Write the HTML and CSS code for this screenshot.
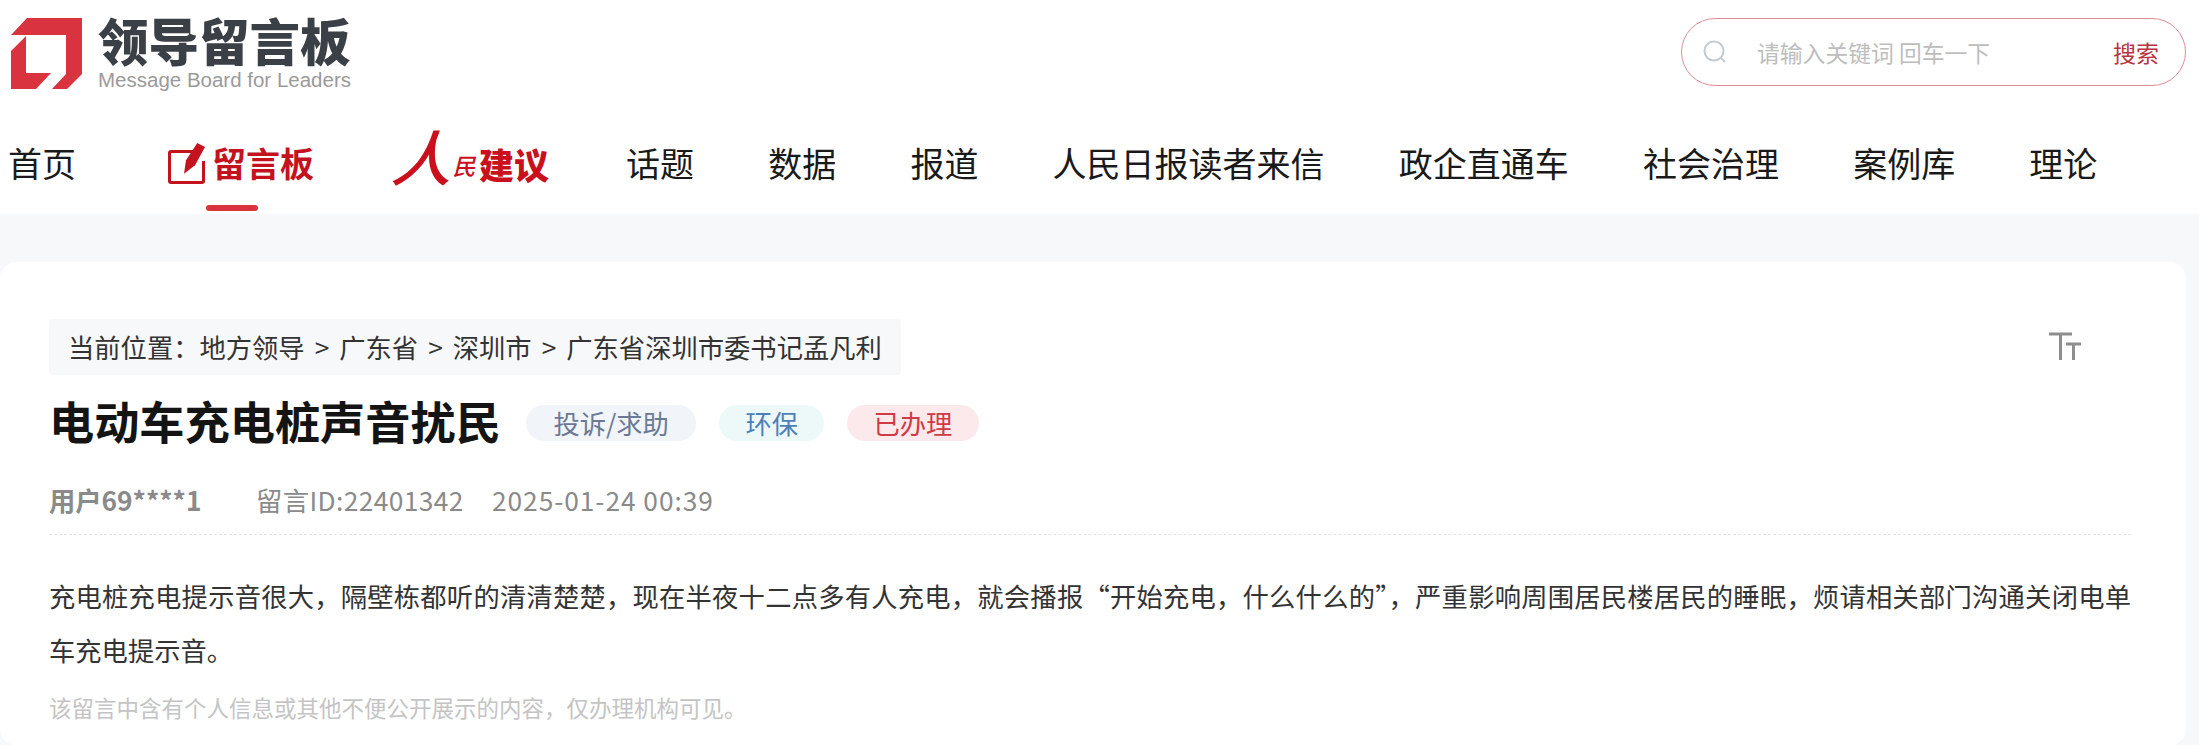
FILE: index.html
```html
<!DOCTYPE html>
<html lang="zh-CN">
<head>
<meta charset="utf-8">
<title>领导留言板</title>
<link rel="stylesheet" href="styles.css">
</head>
<body>
<header class="header">
  <div class="top">
    <a class="brand">
      <svg class="brand-mark" viewBox="0 0 72 72" aria-hidden="true">
        <path fill="#d8333f" d="M16 0H71V56L56 71H41L55 56V17H0Z"/>
        <path fill="#d8333f" d="M0 33L15 18V55H40L25 71H0Z"/>
      </svg>
      <div class="brand-text">
        <div class="brand-cn">领导留言板</div>
        <div class="brand-en">Message Board for Leaders</div>
      </div>
    </a>
    <div class="search">
      <svg class="search-icon" viewBox="0 0 24 24" aria-hidden="true">
        <circle cx="11" cy="11" r="9.5" fill="none" stroke="#c4ccd2" stroke-width="2"/>
        <path d="M18 18l4 4" stroke="#c4ccd2" stroke-width="2" fill="none"/>
      </svg>
      <span class="search-hint">请输入关键词 回车一下</span>
      <span class="search-btn">搜索</span>
    </div>
  </div>
  <nav class="nav">
    <a class="nav-item first">首页</a>
    <a class="nav-item board">
      <svg class="board-icon" viewBox="0 0 38 42" aria-hidden="true">
        <path d="M26 9.500H3a1.500 1.500 0 0 0-1.500 1.500V39A1.500 1.500 0 0 0 3 40.500H34a1.500 1.500 0 0 0 1.500-1.500V19" fill="none" stroke="#c4121f" stroke-width="3"/>
        <path d="M29.300 1L37 5 27 23.300 16 31.700 18 18.300Z" fill="#c4121f"/>
      </svg>
      <span class="board-label">留言板</span>
    </a>
    <a class="nav-item renmin"><span class="rm-ren">人</span><span class="rm-min">民</span><span class="rm-jy">建议</span></a>
    <a class="nav-item">话题</a>
    <a class="nav-item">数据</a>
    <a class="nav-item">报道</a>
    <a class="nav-item">人民日报读者来信</a>
    <a class="nav-item">政企直通车</a>
    <a class="nav-item">社会治理</a>
    <a class="nav-item">案例库</a>
    <a class="nav-item">理论</a>
  </nav>
</header>
<main class="page">
  <article class="card">
    <div class="crumb-row">
      <div class="crumb">当前位置：地方领导<span class="sep">&gt;</span>广东省<span class="sep">&gt;</span>深圳市<span class="sep">&gt;</span>广东省深圳市委书记孟凡利</div>
      <svg class="tt" viewBox="0 0 32 28" aria-hidden="true">
        <path d="M0 2H23M11.500 2V28" stroke="#8e8e8e" stroke-width="3" fill="none"/>
        <path d="M17 12H32M24.500 12V28" stroke="#8e8e8e" stroke-width="3" fill="none"/>
      </svg>
    </div>
    <div class="title-row">
      <h1 class="title">电动车充电桩声音扰民</h1>
      <span class="tag tag-type">投诉/求助</span>
      <span class="tag tag-field">环保</span>
      <span class="tag tag-state">已办理</span>
    </div>
    <div class="meta">
      <span class="meta-user">用户69****1</span>
      <span class="meta-id">留言ID:22401342</span>
      <span class="meta-date">2025-01-24 00:39</span>
    </div>
    <p class="body">充电桩充电提示音很大，隔壁栋都听的清清楚楚，现在半夜十二点多有人充电，就会播报“开始充电，什么什么的”，严重影响周围居民楼居民的睡眠，烦请相关部门沟通关闭电单车充电提示音。</p>
    <p class="note">该留言中含有个人信息或其他不便公开展示的内容，仅办理机构可见。</p>
  </article>
</main>
</body>
</html>
```
FILE: styles.css
```css
* { box-sizing: border-box; }
html, body { margin: 0; height: 745px; overflow: hidden; }
body {
  background: #f7f8fa;
  font-family: "Noto Sans CJK SC", "Noto Sans", sans-serif;
  color: #1a1a1a;
}
.header { background: #fff; height: 214px; }
.top {
  display: flex;
  justify-content: space-between;
  padding: 18px 13px 0 11px;
  height: 111px;
}
.brand { display: flex; gap: 15px; height: 72px; }
.brand-mark { width: 72px; height: 72px; }
.brand-cn {
  font-family: "Liberation Sans", "Noto Sans CJK SC", sans-serif;
  font-size: 50.500px;
  line-height: 52px;
  font-weight: 900;
  color: #3b4046;
  white-space: nowrap;
  height: 53px;
}
.brand-en {
  font-family: "Liberation Sans", sans-serif;
  font-size: 20.500px;
  line-height: 18px;
  color: #9a9a9a;
  white-space: nowrap;
}
.search {
  width: 505px;
  height: 68px;
  border: 1px solid #e08d98;
  border-radius: 34px;
  display: flex;
  align-items: center;
  padding: 0 26px 0 21px;
}
.search-icon { width: 24px; height: 24px; margin-right: 30px; }
.search-hint { font-size: 22.800px; color: #bdbdbd; flex: 1; }
.search-btn { font-size: 23px; color: #b8323f; }
.nav {
  display: flex;
  align-items: center;
  padding-left: 8px;
  height: 103px;
  position: relative;
}
.nav-item {
  font-size: 34px;
  line-height: 50px;
  margin-right: 74.200px;
  white-space: nowrap;
  color: #1a1a1a;
}
.nav-item.first { margin-right: 92px; }
.board { display: flex; align-items: center; gap: 6px; margin-right: 81px; position: relative; }
.board::after {
  content: "";
  position: absolute;
  left: 38px;
  bottom: -23px;
  width: 52px;
  height: 6px;
  border-radius: 3px;
  background: #d8333f;
}
.board-icon { width: 38px; height: 42px; }
.board-label { font-weight: 700; font-size: 34px; color: #c4121f; }
.renmin {
  display: flex;
  align-items: center;
  color: #c9101c;
  margin-right: 77px;
}
.rm-ren { font-size: 60px; line-height: 50px; font-weight: 500; transform: skewX(-18deg); width: 56px; margin: 0 0 16px 4px; }
.rm-min { font-size: 23px; line-height: 40px; font-weight: 500; transform: skewX(-14deg); width: 24px; margin-top: 4px; }
.rm-jy { font-size: 35px; line-height: 44px; font-weight: 900; margin-top: 2px; }
.page { padding: 48px 13px 0 0; }
.card {
  background: #fff;
  border-radius: 16px;
  height: 483px;
  padding: 57px 55px 0 49px;
}
.crumb-row { display: flex; justify-content: space-between; align-items: flex-start; }
.crumb {
  background: #f7f8fa;
  border-radius: 4px;
  height: 56px;
  line-height: 56px;
  padding: 0 19px 0 19px;
  font-size: 26.300px;
  color: #333;
  white-space: nowrap;
}
.sep { margin: 0 10px; }
.tt { width: 32px; height: 28px; margin: 13px 50px 0 0; }
.title-row { display: flex; align-items: center; margin-top: 18px; height: 56px; }
.title {
  margin: 0 25px 0 0;
  font-size: 45.200px;
  line-height: 56px;
  font-weight: 700;
  color: #141414;
  white-space: nowrap;
}
.tag {
  height: 36px;
  line-height: 36px;
  border-radius: 18px;
  padding: 0 26px;
  font-size: 26.300px;
  margin: 3px 23px 0 0;
  white-space: nowrap;
}
.tag-type { background: #f1f4f9; color: #6b7a94; padding: 0 27.500px; }
.tag-field { background: #edf9f8; color: #4f7fb8; }
.tag-state { background: #fbe9eb; color: #cf3a47; padding: 0 26.500px; }
.meta {
  display: flex;
  align-items: center;
  margin-top: 23px;
  height: 63px;
  padding-bottom: 7px;
  font-size: 26.300px;
  color: #8a8a8a;
  border-bottom: 1px dashed #e4e4e4;
}
.meta-user { font-weight: 700; width: 207px; }
.meta-id { width: 236px; letter-spacing: 0.400px; }
.meta-date { letter-spacing: 0.950px; }
.body {
  margin: 34px 0 0;
  font-size: 26.300px;
  line-height: 54px;
  color: #333;
  text-align: justify;
}
.note {
  margin: 14px 0 0;
  font-size: 22.500px;
  line-height: 32px;
  color: #c4c4c4;
}
```
